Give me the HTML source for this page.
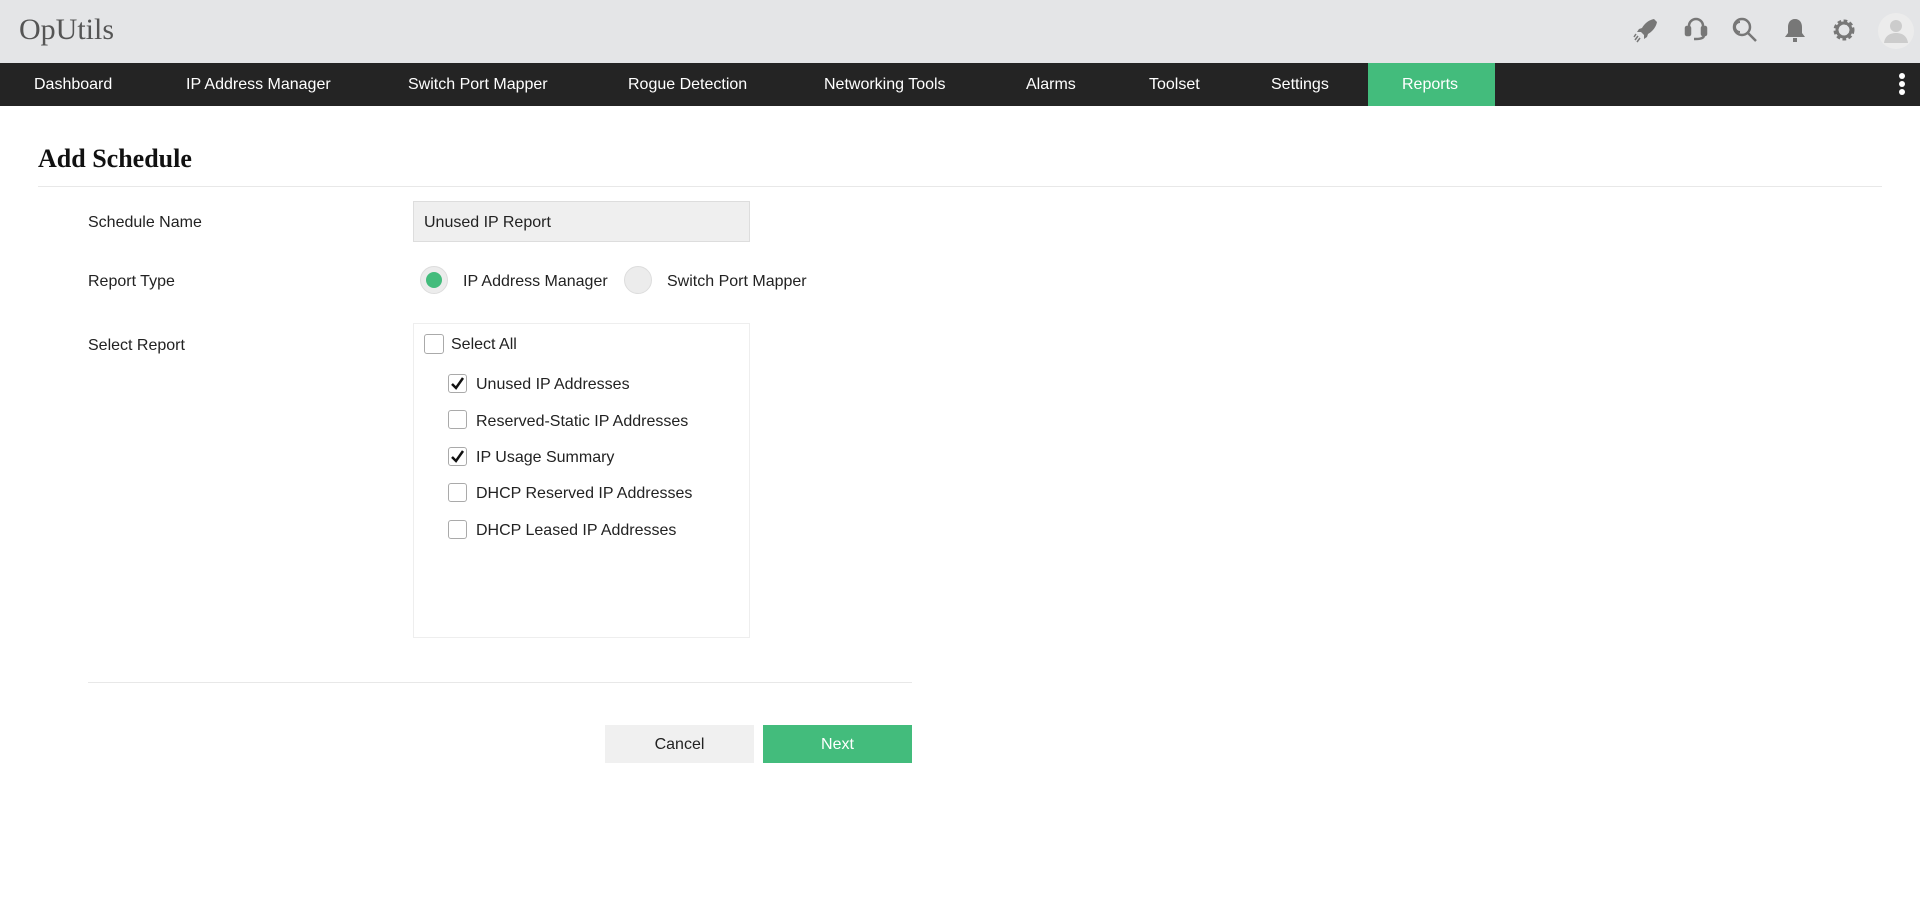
<!DOCTYPE html>
<html><head><meta charset="utf-8"><style>
*{margin:0;padding:0;box-sizing:border-box}
body{width:1920px;height:903px;background:#fff;font-family:"Liberation Sans",sans-serif;color:#222;position:relative;overflow:hidden}
.hdr{position:absolute;left:0;top:0;width:1920px;height:63px;background:#e4e5e7}
.logo{position:absolute;left:19px;top:13px;font-family:"Liberation Serif",serif;font-size:30px;color:#555}
.nav{position:absolute;left:0;top:63px;width:1920px;height:43px;background:#242424}
.nav span{position:absolute;top:13px;color:#fff;font-size:16px}
.rep{position:absolute;left:1368px;top:0;width:127px;height:43px;background:#43bc7c}
.ab{position:absolute}
.title{position:absolute;left:38px;top:144px;font-family:"Liberation Serif",serif;font-size:26px;font-weight:bold;color:#111}
.hr{position:absolute;height:1px;background:#e8e8e8}
.lbl{position:absolute;font-size:16px;color:#222}
.cb{position:absolute;width:19px;height:19px;border:1px solid #aaa;border-radius:3px;background:#fff}
.btn{position:absolute;top:725px;height:38px;width:149px;text-align:center;line-height:40px;font-size:16px}
</style></head><body>
<div class="hdr"><div class="logo">OpUtils</div>
<svg class="ab" style="left:1632px;top:16px" width="28" height="28" viewBox="0 0 28 28" fill="#777"><path d="M22 3c-5 1-9 4-12 9l-3 1 -2 3 4 0 3 3 0 4 3-2 1-3c5-3 8-7 9-12z"/><path d="M6 20l-3 4M8 22l-3 4M4 18l-2 3" stroke="#777" stroke-width="1.5"/></svg>
<svg class="ab" style="left:1683px;top:16px" width="26" height="28" viewBox="0 0 26 28" fill="none" stroke="#777" stroke-width="2.5"><path d="M6 14V10a7 7 0 0114 0v4"/><rect x="3" y="11" width="4" height="8" rx="1" fill="#777"/><rect x="19" y="11" width="4" height="8" rx="1" fill="#777"/><path d="M13 23h-2"/><path d="M21 19c0 3-3 4-8 4"/></svg>
<svg class="ab" style="left:1731px;top:16px" width="28" height="28" viewBox="0 0 28 28" fill="none" stroke="#777" stroke-width="2.5"><circle cx="11" cy="11" r="8"/><path d="M17 17l8 8"/><path d="M9 6a5 5 0 000 10" stroke-width="2"/></svg>
<svg class="ab" style="left:1783px;top:16px" width="24" height="28" viewBox="0 0 24 28" fill="#777"><path d="M12 3c-5 0-7 4-7 8v6l-3 4h20l-3-4v-6c0-4-2-8-7-8z"/><rect x="10" y="22" width="4" height="4"/></svg>
<svg class="ab" style="left:1831px;top:17px" width="26" height="26" viewBox="0 0 26 26"><circle cx="13" cy="13" r="8" fill="none" stroke="#777" stroke-width="5" stroke-dasharray="3.2 2.1"/><circle cx="13" cy="13" r="7" fill="none" stroke="#777" stroke-width="3"/></svg>
<svg class="ab" style="left:1877px;top:12px" width="38" height="38" viewBox="0 0 38 38"><circle cx="19" cy="19" r="18" fill="#ececec"/><circle cx="19" cy="14" r="6" fill="#ccc"/><path d="M7 31c1-8 7-10 12-10s11 2 12 10z" fill="#ccc"/></svg>
</div>
<div class="nav">
<div class="rep"></div>
<span style="left:34px">Dashboard</span>
<span style="left:186px">IP Address Manager</span>
<span style="left:408px">Switch Port Mapper</span>
<span style="left:628px">Rogue Detection</span>
<span style="left:824px">Networking Tools</span>
<span style="left:1026px">Alarms</span>
<span style="left:1149px">Toolset</span>
<span style="left:1271px">Settings</span>
<span style="left:1402px">Reports</span>
<svg class="ab" style="left:1896px;top:8px" width="12" height="28"><circle cx="6" cy="5" r="3" fill="#fff"/><circle cx="6" cy="13" r="3" fill="#fff"/><circle cx="6" cy="21" r="3" fill="#fff"/></svg>
</div>
<div class="title">Add Schedule</div>
<div class="hr" style="left:38px;top:186px;width:1844px"></div>
<div class="lbl" style="left:88px;top:214px">Schedule Name</div>
<div class="lbl" style="left:88px;top:273px">Report Type</div>
<div class="lbl" style="left:88px;top:337px">Select Report</div>
<div class="ab" style="left:413px;top:201px;width:337px;height:41px;background:#efefef;border:1px solid #ddd"></div>
<div class="lbl" style="left:424px;top:214px">Unused IP Report</div>
<div class="ab" style="left:420px;top:266px;width:28px;height:28px;border-radius:50%;background:#ececec;border:1px solid #ddd"></div>
<div class="ab" style="left:426px;top:272px;width:16px;height:16px;border-radius:50%;background:#43bc7c"></div>
<div class="lbl" style="left:463px;top:273px">IP Address Manager</div>
<div class="ab" style="left:624px;top:266px;width:28px;height:28px;border-radius:50%;background:#ececec;border:1px solid #ddd"></div>
<div class="lbl" style="left:667px;top:273px">Switch Port Mapper</div>
<div class="ab" style="left:413px;top:323px;width:337px;height:315px;border:1px solid #eee"></div>
<div class="cb" style="left:424px;top:334px;width:20px;height:20px"></div><div class="lbl" style="left:451px;top:336px">Select All</div>
<div class="cb" style="left:448px;top:374px"></div><div class="lbl" style="left:476px;top:376px">Unused IP Addresses</div>
<div class="cb" style="left:448px;top:410px"></div><div class="lbl" style="left:476px;top:413px">Reserved-Static IP Addresses</div>
<div class="cb" style="left:448px;top:447px"></div><div class="lbl" style="left:476px;top:449px">IP Usage Summary</div>
<div class="cb" style="left:448px;top:483px"></div><div class="lbl" style="left:476px;top:485px">DHCP Reserved IP Addresses</div>
<div class="cb" style="left:448px;top:520px"></div><div class="lbl" style="left:476px;top:522px">DHCP Leased IP Addresses</div>
<svg class="ab" style="left:450px;top:376px" width="15" height="15"><path d="M2 8l4 4 7-10" stroke="#111" stroke-width="2.5" fill="none"/></svg>
<svg class="ab" style="left:450px;top:449px" width="15" height="15"><path d="M2 8l4 4 7-10" stroke="#111" stroke-width="2.5" fill="none"/></svg>
<div class="hr" style="left:88px;top:682px;width:824px"></div>
<div class="btn" style="left:605px;background:#f0f0f0;color:#222">Cancel</div>
<div class="btn" style="left:763px;background:#43bc7c;color:#fff">Next</div>
</body></html>
